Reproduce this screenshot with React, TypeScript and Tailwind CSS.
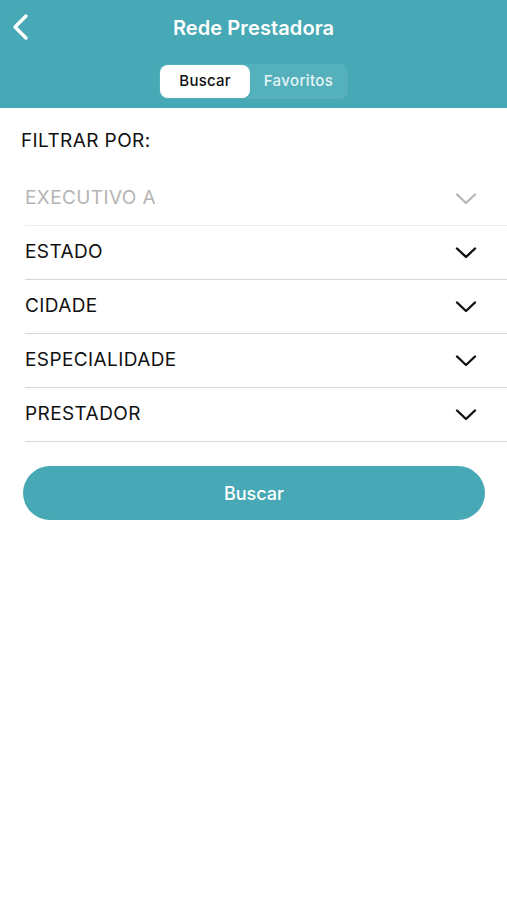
import React from "react";

const Chevron = ({ color }: { color: string }) => (
  <svg width="22" height="14" viewBox="0 0 22 14" fill="none">
    <path d="M2 2.5 L11 11 L20 2.5" stroke={color} strokeWidth="2.4" strokeLinecap="round" strokeLinejoin="round" />
  </svg>
);

const rows = [
  { label: "EXECUTIVO A", disabled: true },
  { label: "ESTADO" },
  { label: "CIDADE" },
  { label: "ESPECIALIDADE" },
  { label: "PRESTADOR" },
];

export default function App() {
  return (
    <div className="w-[507px] h-[900px] bg-white" style={{ fontFamily: "Inter, 'Liberation Sans', sans-serif" }}>
      <div className="h-[108px] bg-[#47a9b5] flex flex-col">
        <div className="relative h-[56px] flex items-center justify-center">
          <svg className="absolute left-[11px] top-[13px]" width="20" height="28" viewBox="0 0 20 28" fill="none">
            <path d="M15 3 L4 14 L15 25" stroke="white" strokeWidth="3.4" strokeLinecap="round" strokeLinejoin="round" />
          </svg>
          <span className="text-white text-[20px] font-semibold tracking-[0.1px]">Rede Prestadora</span>
        </div>
        <div className="flex justify-center mt-[8px]">
          <div className="flex bg-[#54b1bc] rounded-[8px] p-[1px]">
            <div className="w-[90px] h-[33px] bg-white rounded-[8px] flex items-center justify-center text-[15px] font-medium text-[#111] tracking-[0.2px]">Buscar</div>
            <div className="w-[97px] h-[33px] flex items-center justify-center text-[15px] font-medium text-[#e6f4f6] tracking-[0.4px]">Favoritos</div>
          </div>
        </div>
      </div>
      <div className="pl-[21px] pt-[21px] text-[19px] text-[#111] leading-[24px] tracking-[0.4px]">FILTRAR POR:</div>
      <div className="pl-[25px] mt-[19px]">
        {rows.map((r, i) => (
          <div
            key={r.label}
            className={`h-[54px] flex items-center justify-between pr-[30px] border-b ${i === 0 ? "border-[#ededed]" : "border-[#d6d6d6]"}`}
          >
            <span className={`text-[19px] tracking-[0.4px] ${r.disabled ? "text-[#b4b4b4]" : "text-[#111]"}`}>{r.label}</span>
            <Chevron color={r.disabled ? "#b8b8b8" : "#111"} />
          </div>
        ))}
      </div>
      <div className="pl-[23px] pr-[22px] mt-[24px]">
        <div className="h-[54px] rounded-full bg-[#47a9b5] flex items-center justify-center text-white text-[18px] font-medium">Buscar</div>
      </div>
    </div>
  );
}
